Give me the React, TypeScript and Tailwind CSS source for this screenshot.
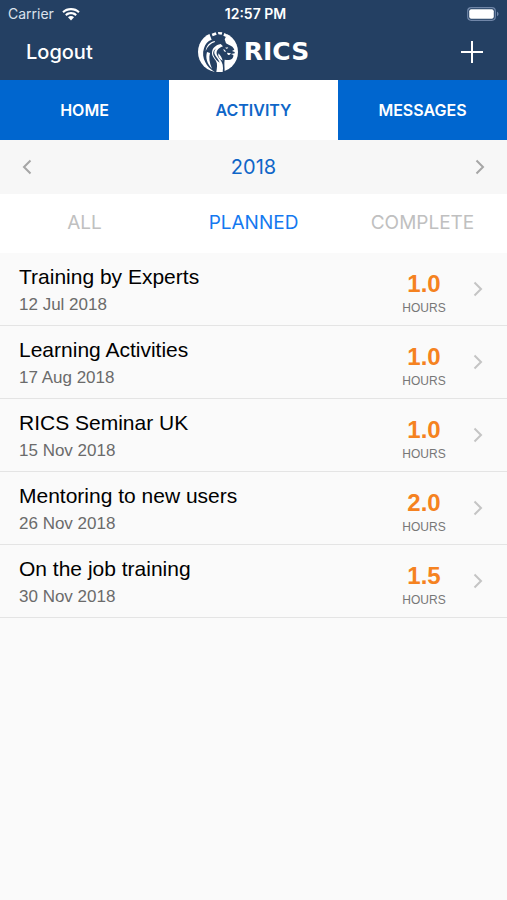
import clsx from "clsx";

const tabs = ["HOME", "ACTIVITY", "MESSAGES"];
const filters = ["ALL", "PLANNED", "COMPLETE"];

const activities = [
  {title: "Training by Experts", date: "12 Jul 2018", hours: "1.0"},
  {title: "Learning Activities", date: "17 Aug 2018", hours: "1.0"},
  {title: "RICS Seminar UK", date: "15 Nov 2018", hours: "1.0"},
  {title: "Mentoring to new users", date: "26 Nov 2018", hours: "2.0"},
  {title: "On the job training", date: "30 Nov 2018", hours: "1.5"},
];

function Chevron({left = false, className = ""}) {
  return (
    <svg
      viewBox="0 0 10 16"
      fill="none"
      stroke="currentColor"
      className={clsx("w-[10px] h-4", className)}
    >
      <path d={left ? "M8.5 1.5 2 8l6.5 6.5" : "M1.5 1.5 8 8l-6.5 6.5"} />
    </svg>
  );
}

function Wifi() {
  return (
    <svg viewBox="0 0 18 13" className="w-[18px] h-[13px]" fill="currentColor">
      <path d="M9 0C5.600 0 2.600 1.200.3 3.400l1.500 1.600C3.700 3.200 6.200 2.200 9 2.200s5.300 1 7.200 2.800l1.500-1.600C15.400 1.200 12.400 0 9 0z" />
      <path d="M9 4.100c-2.300 0-4.300.8-5.900 2.300l1.500 1.600C5.800 6.900 7.300 6.300 9 6.300s3.200.6 4.400 1.700l1.500-1.600C13.300 4.900 11.300 4.100 9 4.100z" />
      <path d="M9 8.100c-1.200 0-2.200.4-3 1.200L9 12.500l3-3.200c-.8-.8-1.800-1.200-3-1.200z" />
    </svg>
  );
}

function Battery() {
  return (
    <svg viewBox="0 0 32 14" className="w-8 h-[14px]" fill="none">
      <rect x="0.700" y="0.700" width="27.600" height="12.600" rx="3.500" stroke="#7086a8" strokeWidth="1.200" />
      <rect x="2.200" y="2.200" width="24.600" height="9.600" rx="2" fill="#fff" />
      <path d="M30 4.800v4.400c1-.4 1.500-1.200 1.500-2.200S31 5.200 30 4.800z" fill="#7086a8" />
    </svg>
  );
}

function LionLogo() {
  return (
    <svg viewBox="0 0 120 120" className="w-10 h-10">
      <circle cx="60" cy="60" r="60" fill="#fff" />
      {/* silhouette */}
      <path
        fill="#244063"
        d="M32 0 41 23C29 27 21 36 18 49c-5 14-3 29 4 42 5 11 15 21 28 29h30c0-15-2-26 0-37 7 1 16 2 21-2 4-3 6-8 5-12l-7-3 11-2v-4l-8-3 7-4c-2-7-8-12-17-15l-8-4-4-12 11-22z"
      />
      {/* tips along the top */}
      <path fill="#fff" d="M41 5 53 1l3 7-12 5zM60 0l13 1-2 7-10-1zM79 3l10 5-5 7-8-4z" />
      {/* back of the mane */}
      <path
        fill="#fff"
        d="M50 27C35 30 25 41 23 57c6-14 15-23 28-27zM27 60c-5 17 0 35 15 50-8-18-10-34-6-47z"
      />
      {/* neck */}
      <path
        fill="#fff"
        d="M68 36c-15 3-25 12-26 25-1 12 7 18 12 26 5 9 3 20 1 33h19c3-16 0-28-8-38-9-11-13-18-8-27 3-6 9-9 17-12z"
      />
      <path
        fill="#fff"
        d="M61 64c7 7 11 14 13 22-10-5-15-13-13-22zM76 51c4 2 7 5 8 9l-6-2zM87 62l12 2-5 5c-3 1-6-2-7-7zM81 47l10-1-4 5z"
      />
      <path fill="#244063" d="M55 49c-7 7-8 14-4 20 4 7 11 13 14 23-8-5-14-13-18-21-4-9 0-17 8-22z" />
    </svg>
  );
}

function Header() {
  return (
    <header className="bg-[#244063] text-white h-20 flex flex-col">
      <div className="h-7 px-2 grid grid-cols-[1fr_auto_1fr] items-center">
        <div className="flex items-center gap-2 text-sm text-[#dbe2ec]">
          Carrier
          <span className="text-white">
            <Wifi />
          </span>
        </div>
        <span className="text-sm font-semibold pl-1">12:57 PM</span>
        <div className="flex justify-end">
          <Battery />
        </div>
      </div>
      <div className="h-12 px-6 grid grid-cols-[1fr_auto_1fr] items-center">
        <button className="justify-self-start pl-0.5 text-xl font-[500]">Logout</button>
        <div className="flex items-center gap-1.5">
          <LionLogo />
          <span className="font-['DejaVu_Sans',sans-serif] text-[25px] leading-10 font-bold">
            RICS
          </span>
        </div>
        <button aria-label="Add activity" className="justify-self-end">
          <svg viewBox="0 0 22 22" className="w-[22px] h-[22px]" fill="none" stroke="currentColor" strokeWidth="2">
            <path d="M11 0v22M0 11h22" />
          </svg>
        </button>
      </div>
    </header>
  );
}

function App() {
  return (
    <div className="min-h-screen bg-[#fafafa] font-[Inter,sans-serif]">
      <Header />
      <nav className="grid grid-cols-3 h-[60px] bg-[#0066cf]">
        {tabs.map((tab) => (
          <button
            key={tab}
            className={clsx(
              "text-base font-semibold",
              tab === "ACTIVITY" ? "bg-white text-[#0f66c8]" : "text-white"
            )}
          >
            {tab}
          </button>
        ))}
      </nav>
      <div className="h-[54px] px-[22px] flex items-center justify-between bg-[#f7f7f7]">
        <button aria-label="Previous year">
          <Chevron left className="stroke-2 text-[#a6a6a6]" />
        </button>
        <span className="text-xl text-[#0f66c8]">2018</span>
        <button aria-label="Next year">
          <Chevron className="stroke-2 text-[#a6a6a6]" />
        </button>
      </div>
      <div className="grid grid-cols-3 h-[59px] bg-white">
        {filters.map((filter) => (
          <button
            key={filter}
            className={clsx(
              "text-[19px]",
              filter === "PLANNED" ? "text-[#1479f0]" : "text-[#c0c0c0]"
            )}
          >
            {filter}
          </button>
        ))}
      </div>
      <ul className="font-['Liberation_Sans',sans-serif]">
        {activities.map((item) => (
          <li key={item.title} className="border-b border-[#e4e4e4]">
            <button className="w-full flex items-center py-2 pl-[19px] pr-6 text-left">
              <div className="flex-1">
                <h2 className="text-[21px] leading-8 text-black">{item.title}</h2>
                <p className="text-[17px] leading-6 text-[#6b6b6b]">{item.date}</p>
              </div>
              <div className="w-[54px] pt-1.5 text-center">
                <p className="text-2xl leading-8 font-bold text-[#f58220]">{item.hours}</p>
                <p className="text-xs leading-4 text-[#777777]">HOURS</p>
              </div>
              <Chevron className="ml-[22px] text-[#c4c4c4] stroke-2" />
            </button>
          </li>
        ))}
      </ul>
    </div>
  );
}

export default App;
